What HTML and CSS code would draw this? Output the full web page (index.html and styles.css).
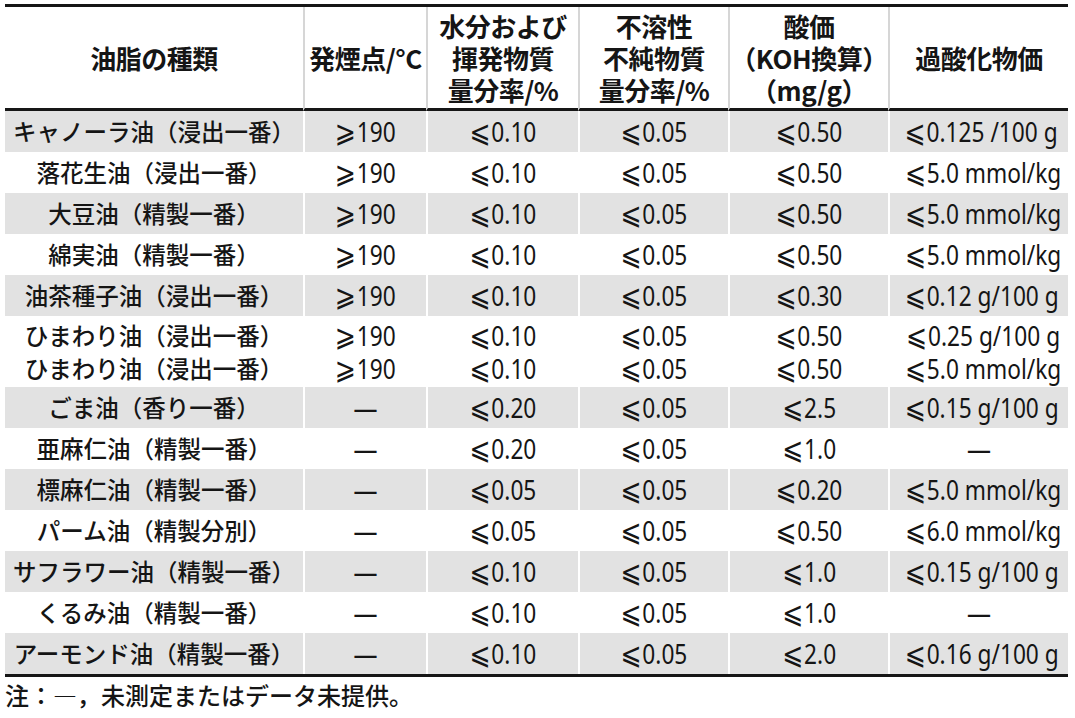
FILE: index.html
```html
<!DOCTYPE html>
<html lang="ja">
<head>
<meta charset="utf-8">
<title>油脂の品質基準</title>
<link rel="stylesheet" href="styles.css">
</head>
<body>
<div class="page">
  <table class="oil">
    <colgroup>
      <col class="w1"><col class="w2"><col class="w3"><col class="w4"><col class="w5"><col class="w6">
    </colgroup>
    <thead>
      <tr>
        <th>油脂の種類</th>
        <th><span class="ln">発煙点/°C</span></th>
        <th><span class="ln">水分および</span><span class="ln">揮発物質</span><span class="ln">量分率/%</span></th>
        <th><span class="ln">不溶性</span><span class="ln">不純物質</span><span class="ln">量分率/%</span></th>
        <th><span class="ln">酸価</span><span class="ln">（KOH換算）</span><span class="ln">（mg/g）</span></th>
        <th>過酸化物価</th>
      </tr>
    </thead>
    <tbody>
      <tr class="g"><td class="name">キャノーラ油（浸出一番）</td><td><span class="v"><i>⩾</i>190</span></td><td><span class="v"><i>⩽</i>0.10</span></td><td><span class="v"><i>⩽</i>0.05</span></td><td><span class="v"><i>⩽</i>0.50</span></td><td><span class="v"><i>⩽</i>0.125 /100 g</span></td></tr>
      <tr><td class="name">落花生油（浸出一番）</td><td><span class="v"><i>⩾</i>190</span></td><td><span class="v"><i>⩽</i>0.10</span></td><td><span class="v"><i>⩽</i>0.05</span></td><td><span class="v"><i>⩽</i>0.50</span></td><td><span class="v"><i>⩽</i>5.0 mmol/kg</span></td></tr>
      <tr class="g"><td class="name">大豆油（精製一番）</td><td><span class="v"><i>⩾</i>190</span></td><td><span class="v"><i>⩽</i>0.10</span></td><td><span class="v"><i>⩽</i>0.05</span></td><td><span class="v"><i>⩽</i>0.50</span></td><td><span class="v"><i>⩽</i>5.0 mmol/kg</span></td></tr>
      <tr><td class="name">綿実油（精製一番）</td><td><span class="v"><i>⩾</i>190</span></td><td><span class="v"><i>⩽</i>0.10</span></td><td><span class="v"><i>⩽</i>0.05</span></td><td><span class="v"><i>⩽</i>0.50</span></td><td><span class="v"><i>⩽</i>5.0 mmol/kg</span></td></tr>
      <tr class="g"><td class="name">油茶種子油（浸出一番）</td><td><span class="v"><i>⩾</i>190</span></td><td><span class="v"><i>⩽</i>0.10</span></td><td><span class="v"><i>⩽</i>0.05</span></td><td><span class="v"><i>⩽</i>0.30</span></td><td><span class="v"><i>⩽</i>0.12 g/100 g</span></td></tr>
      <tr class="dbl"><td class="name">ひまわり油（浸出一番）<br>ひまわり油（浸出一番）</td><td><span class="v"><i>⩾</i>190<br><i>⩾</i>190</span></td><td><span class="v"><i>⩽</i>0.10<br><i>⩽</i>0.10</span></td><td><span class="v"><i>⩽</i>0.05<br><i>⩽</i>0.05</span></td><td><span class="v"><i>⩽</i>0.50<br><i>⩽</i>0.50</span></td><td><span class="v"><i>⩽</i>0.25 g/100 g<br><i>⩽</i>5.0 mmol/kg</span></td></tr>
      <tr class="g"><td class="name">ごま油（香り一番）</td><td class="dash">—</td><td><span class="v"><i>⩽</i>0.20</span></td><td><span class="v"><i>⩽</i>0.05</span></td><td><span class="v"><i>⩽</i>2.5</span></td><td><span class="v"><i>⩽</i>0.15 g/100 g</span></td></tr>
      <tr><td class="name">亜麻仁油（精製一番）</td><td class="dash">—</td><td><span class="v"><i>⩽</i>0.20</span></td><td><span class="v"><i>⩽</i>0.05</span></td><td><span class="v"><i>⩽</i>1.0</span></td><td class="dash">—</td></tr>
      <tr class="g"><td class="name">標麻仁油（精製一番）</td><td class="dash">—</td><td><span class="v"><i>⩽</i>0.05</span></td><td><span class="v"><i>⩽</i>0.05</span></td><td><span class="v"><i>⩽</i>0.20</span></td><td><span class="v"><i>⩽</i>5.0 mmol/kg</span></td></tr>
      <tr><td class="name">パーム油（精製分別）</td><td class="dash">—</td><td><span class="v"><i>⩽</i>0.05</span></td><td><span class="v"><i>⩽</i>0.05</span></td><td><span class="v"><i>⩽</i>0.50</span></td><td><span class="v"><i>⩽</i>6.0 mmol/kg</span></td></tr>
      <tr class="g"><td class="name">サフラワー油（精製一番）</td><td class="dash">—</td><td><span class="v"><i>⩽</i>0.10</span></td><td><span class="v"><i>⩽</i>0.05</span></td><td><span class="v"><i>⩽</i>1.0</span></td><td><span class="v"><i>⩽</i>0.15 g/100 g</span></td></tr>
      <tr><td class="name">くるみ油（精製一番）</td><td class="dash">—</td><td><span class="v"><i>⩽</i>0.10</span></td><td><span class="v"><i>⩽</i>0.05</span></td><td><span class="v"><i>⩽</i>1.0</span></td><td class="dash">—</td></tr>
      <tr class="g"><td class="name">アーモンド油（精製一番）</td><td class="dash">—</td><td><span class="v"><i>⩽</i>0.10</span></td><td><span class="v"><i>⩽</i>0.05</span></td><td><span class="v"><i>⩽</i>2.0</span></td><td><span class="v"><i>⩽</i>0.16 g/100 g</span></td></tr>
    </tbody>
  </table>
  <p class="note">注：—，未測定またはデータ未提供。</p>
</div>
</body>
</html>
```
FILE: styles.css
```css
html, body {
  margin: 0;
  padding: 0;
  background: #ffffff;
}

.page {
  padding: 4px 0 0 5px;
  color: #151515;
  font-family: "Noto Sans CJK JP", sans-serif;
}

.oil {
  width: 1063px;
  table-layout: fixed;
  border-collapse: separate;
  border-spacing: 0;
  border-top: 3px solid #161616;
  border-bottom: 3px solid #161616;
}

.w1 { width: 298px; }
.w2 { width: 123px; }
.w3 { width: 152px; }
.w4 { width: 150px; }
.w5 { width: 160px; }
.w6 { width: 180px; }

.oil th {
  height: 101px;
  padding: 0;
  font-size: 26px;
  font-weight: 700;
  line-height: 32px;
  text-align: center;
  vertical-align: middle;
  border-bottom: 3px solid #161616;
  border-left: 2px solid #d6d6d6;
  white-space: nowrap;
  letter-spacing: -0.5px;
}

.oil th:first-child {
  border-left: none;
}

.ln {
  display: block;
  height: 32px;
}

.oil td {
  height: 41px;
  padding: 0;
  text-align: center;
  vertical-align: middle;
  font-family: "Noto Sans", sans-serif;
  font-size: 27px;
  line-height: 32px;
  border-left: 2px solid #ffffff;
  white-space: nowrap;
}

.oil td:first-child {
  border-left: none;
}

.v {
  display: inline-block;
  transform: scaleX(0.84);
}

.v i {
  font-style: normal;
  font-family: "DejaVu Sans", sans-serif;
  font-size: 30px;
  line-height: 20px;
  margin-right: 1px;
}

.oil td.name {
  font-family: "Noto Sans CJK JP", sans-serif;
  font-size: 23.5px;
  font-weight: 500;
  line-height: 33px;
}

.oil td.dash {
  font-family: "Noto Sans", sans-serif;
  font-size: 24px;
  font-weight: 600;
}

.oil tr.dbl td {
  height: 71px;
  line-height: 33px;
}

.oil tr.g td {
  background: #e2e2e2;
}

.note {
  margin: 0;
  font-size: 24px;
  font-weight: 500;
  line-height: 36px;
}
```
